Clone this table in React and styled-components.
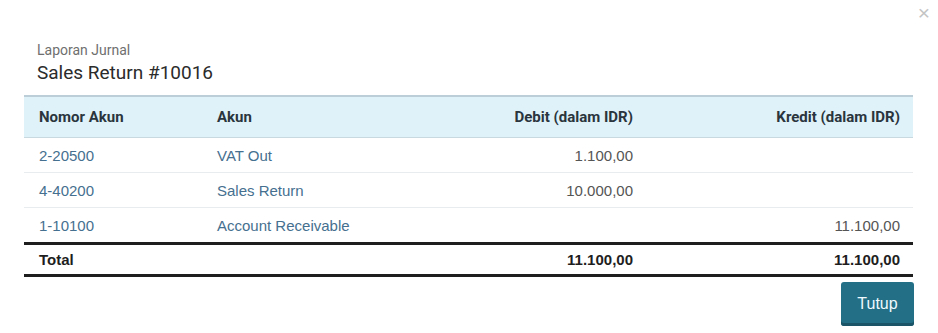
import styled, { createGlobalStyle } from 'styled-components'

const GlobalStyle = createGlobalStyle`
    body {
        margin: 0;
        background: #fff;
        font-family: "Liberation Sans", Arial, sans-serif;
    }
`;

const rows = [
    { code: '2-20500', name: 'VAT Out', debit: '1.100,00', credit: '' },
    { code: '4-40200', name: 'Sales Return', debit: '10.000,00', credit: '' },
    { code: '1-10100', name: 'Account Receivable', debit: '', credit: '11.100,00' },
];

const App = () => {
    return (
        <>
            <GlobalStyle />
            <StyledModal>
                <CloseButton aria-label="close">×</CloseButton>
                <ModalHeader>
                    <small>Laporan Jurnal</small>
                    <h3>Sales Return #10016</h3>
                </ModalHeader>
                <JournalTable>
                    <colgroup>
                        <col style={{ width: 178 }} />
                        <col style={{ width: 268 }} />
                        <col style={{ width: 178 }} />
                        <col />
                    </colgroup>
                    <thead>
                        <tr>
                            <th>Nomor Akun</th>
                            <th>Akun</th>
                            <th className="num">Debit (dalam IDR)</th>
                            <th className="num last">Kredit (dalam IDR)</th>
                        </tr>
                    </thead>
                    <tbody>
                        {rows.map((r) => (
                            <tr key={r.code}>
                                <td><a href="#">{r.code}</a></td>
                                <td><a href="#">{r.name}</a></td>
                                <td className="num">{r.debit}</td>
                                <td className="num last">{r.credit}</td>
                            </tr>
                        ))}
                    </tbody>
                    <tfoot>
                        <tr>
                            <td>Total</td>
                            <td></td>
                            <td className="num">11.100,00</td>
                            <td className="num last">11.100,00</td>
                        </tr>
                    </tfoot>
                </JournalTable>
                <ModalFooter>
                    <Button>Tutup</Button>
                </ModalFooter>
            </StyledModal>
        </>
    )
};

const StyledModal = styled.div`
    position: relative;
    width: 938px;
    height: 333px;
    box-sizing: border-box;
    padding: 42px 25px 0 24px;
`;

const CloseButton = styled.button`
    position: absolute;
    top: 2px;
    right: 8px;
    border: none;
    background: none;
    padding: 0;
    font-size: 21px;
    line-height: 1;
    color: #c4c4c4;
    font-family: "Liberation Sans", Arial, sans-serif;
    cursor: pointer;
`;

const ModalHeader = styled.div`
    padding: 0 0 0 13px;
    font-family: Roboto, "Liberation Sans", sans-serif;
    small {
        display: block;
        font-size: 14px;
        line-height: 17px;
        color: #6f6f6f;
    }
    h3 {
        margin: 2px 0 0;
        font-size: 19px;
        line-height: 23px;
        font-weight: 400;
        color: #2b2b2b;
    }
`;

const JournalTable = styled.table`
    width: 889px;
    margin-top: 11px;
    border-collapse: collapse;
    table-layout: fixed;
    font-size: 15px;

    th, td {
        padding: 0 15px;
        text-align: left;
        white-space: nowrap;
    }
    .num {
        text-align: right;
    }
    .last {
        padding-right: 13px;
    }
    thead th {
        height: 40px;
        background: #dff2fa;
        border-top: 2px solid #bccfd8;
        border-bottom: 1px solid #c9d9e0;
        font-family: Roboto, "Liberation Sans", sans-serif;
        font-weight: 700;
        color: #2a353d;
    }
    tbody td {
        height: 34px;
        border-bottom: 1px solid #e8ecee;
        color: #555;
    }
    tbody tr:last-child td {
        border-bottom: 3px solid #1e1e1e;
    }
    a {
        color: #46708f;
        text-decoration: none;
    }
    tfoot td {
        height: 29px;
        font-weight: 700;
        color: #1e1e1e;
        border-bottom: 3px solid #1e1e1e;
    }
`;

const ModalFooter = styled.div`
    display: flex;
    justify-content: flex-end;
    padding-top: 5px;
    width: 890px;
`;

const Button = styled.button`
    width: 73px;
    height: 44px;
    border: none;
    border-radius: 3px;
    background: #236f86;
    box-shadow: inset 0 -3px 0 #1a5466;
    color: #eefaff;
    font-size: 16px;
    font-family: "Liberation Sans", Arial, sans-serif;
    cursor: pointer;
`;

export default App;
